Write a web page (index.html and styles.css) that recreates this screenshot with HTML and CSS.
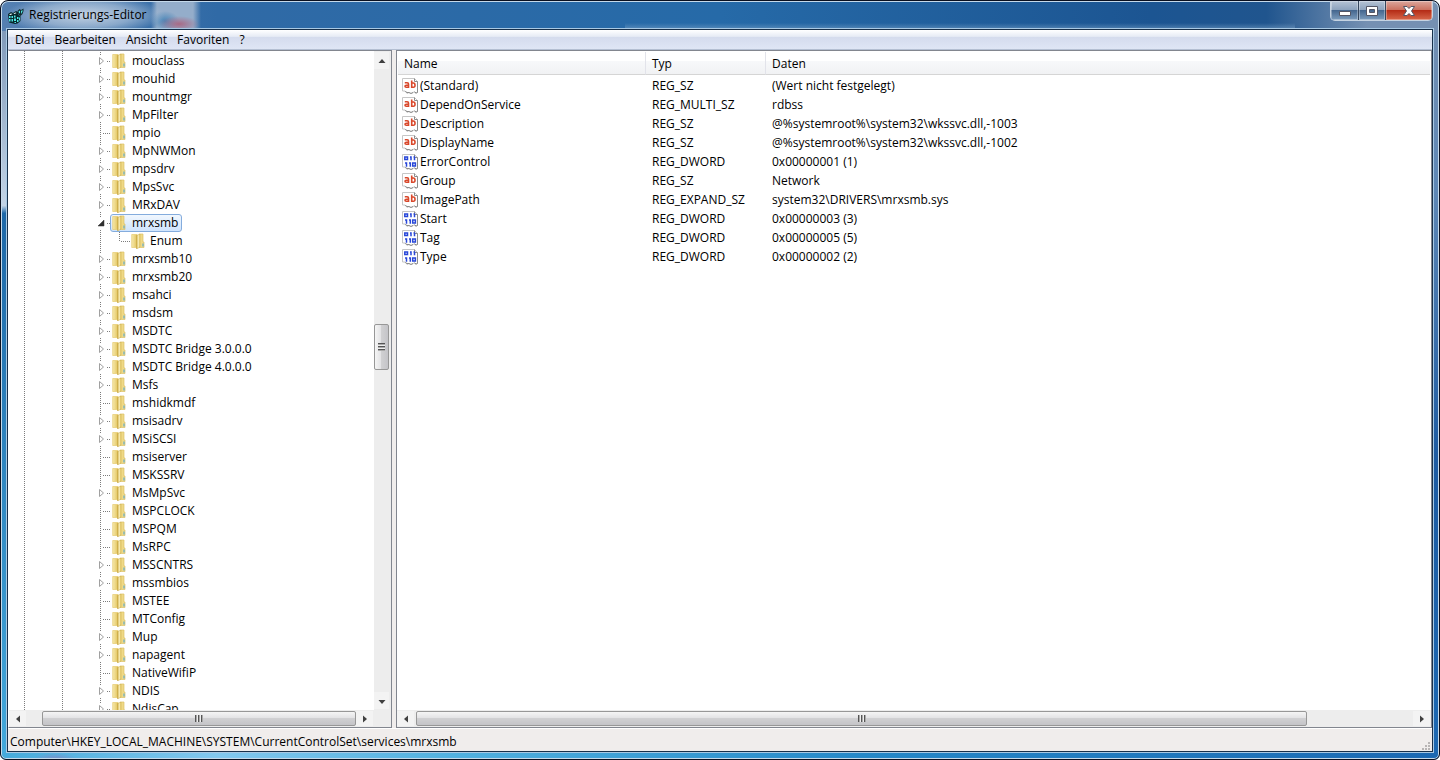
FILE: index.html
```html
<!DOCTYPE html>
<html lang="de">
<head>
<meta charset="utf-8">
<title>Registrierungs-Editor</title>
<link rel="stylesheet" href="styles.css">
</head>
<body>
<svg class="defs" aria-hidden="true">
  <defs>
    <linearGradient id="fl" x1="0" x2="1"><stop offset="0" stop-color="#f7eaae"/><stop offset="1" stop-color="#e2c35c"/></linearGradient>
    <linearGradient id="fr" x1="0" x2="1"><stop offset="0" stop-color="#c9a640"/><stop offset=".5" stop-color="#f9eeb8"/><stop offset="1" stop-color="#e6cc6c"/></linearGradient>
    <symbol id="folder" viewBox="0 0 14 16">
      <path d="M.700 1.500H6V14.500H.700z" fill="url(#fl)" stroke="#e6cb70" stroke-width=".7"/>
      <path d="M8.500 1h3.500v8h1v5.500H8z" fill="#efd986" stroke="#dcc168" stroke-width=".7"/>
      <path d="M5.500 2.500 9 1v13l-3.500 2z" fill="url(#fr)" stroke="#c9a845" stroke-width=".5"/>
      <path d="M11.500 10.500h1v3h-1z" fill="#48a4dc"/>
    </symbol>
    <symbol id="page" viewBox="0 0 16 16">
      <path d="M.5.500H12.500l3 3v11l-2 1-1.500-1.500-2 1-1 .5-2-1-1 1-2-1-1-1.500H.500z" fill="#fff" stroke="#c6c6c6"/>
      <path d="M12.500.500v3h3v11l-1.500.500-1.500-1.500M11 14.500l-2 1-2-1H4.500l-1-1.500" fill="none" stroke="#8c8c8c"/>
    </symbol>
    <symbol id="text" viewBox="0 0 16 16">
      <use href="#page"/>
      <path d="M2.800 4.800h2.400q1.300 0 1.300 1.200V10M6.500 7.300H4.300Q3 7.300 3 8.300t1.200 1h2.300M9.700 2.500V10M9.700 5h1.600q1.700 0 1.700 2.200T11.300 9.300H9.700" fill="none" stroke="#d9482b" stroke-width="1.600"/>
    </symbol>
    <symbol id="binary" viewBox="0 0 16 16">
      <use href="#page"/>
      <path d="M2.800 3h2.700v2.500H2.800zM10.700 9h2.700v3h-2.700zM9 2.200v4.100M12.500 2.200v4.100M4.500 8.200v4.600M8.300 8.200v4.600M8 3h1M11.500 3h1M3 9h1.500M7 9h1" fill="none" stroke="#2847d8" stroke-width="1.500"/>
    </symbol>
  </defs>
</svg>
<div class="window">
  <header class="titlebar">
    <svg class="app-icon" viewBox="0 0 16 16" aria-hidden="true">
      <path d="M0 6l3-2 2 1 3-2 2 1 .5 3 2 1v5l-3 2.500L7 16l-6-1.500z" fill="#06282c"/>
      <path d="M1 6.500l2-1 1.500.5-2 1zM5.500 5.500l2-1 1 .5-2 1z" fill="#fff"/>
      <path d="M1 8h1.500v2H1zM3.500 8H5v2H3.500zM6 7.500h1.500v2H6zM1 11h1.500v2.500H1zM3.500 11H5v2.500H3.500zM6 10.500h2V13H6zM9 9h1.500v2H9zM9 12h1.500v2H9zM6.500 14h1.500v1H6.500zM11 9.500h1v3h-1z" fill="#4fe4e2"/>
      <path d="M9.500 3l2-2 1.500 1L15.500.500v2.500l-1 3-2 2-2-1.500z" fill="#102d30"/>
      <path d="M10.500 3.500l1.500-1v3l-1-.5zM13 3l1.500-1v1.500L13 6z" fill="#4fe4e2"/>
    </svg>
    <h1 class="title">Registrierungs-Editor</h1>
    <div class="captions">
      <button class="cap" aria-label="Minimieren"><svg viewBox="0 0 14 12"><path d="M1.500 6.500h11v4h-11z" fill="#fff" stroke="#535666"/></svg></button>
      <button class="cap max" aria-label="Maximieren"><svg viewBox="0 0 14 12"><path fill-rule="evenodd" d="M1.500 1.500h11v9h-11zM4.500 4.500v3h5v-3z" fill="#fff" stroke="#535666"/></svg></button>
      <button class="cap close" aria-label="Schließen"><svg viewBox="0 0 14 12"><path d="M1.500 1.500h3.500l2 2 2-2h3.500L9.500 6l3 4.500H9l-2-2-2 2H1.500l3-4.500z" fill="#fff" stroke="#535666"/></svg></button>
    </div>
  </header>
  <main class="client">
    <nav class="menu">
      <button>Datei</button><button>Bearbeiten</button><button>Ansicht</button><button>Favoriten</button><button>?</button>
    </nav>
    <div class="panes">
      <section class="pane tree-pane" aria-label="Schlüssel">
        <div class="tree-area">
          <ul class="tree" id="tree"></ul>
          <div class="vscroll">
            <button class="arrow" aria-label="Nach oben"><svg viewBox="0 0 8 8"><path d="M.500 6L4 2l3.500 4z"/></svg></button>
            <div class="track"><div class="thumb"><i></i></div></div>
            <button class="arrow" aria-label="Nach unten"><svg viewBox="0 0 8 8"><path d="M.500 3L4 7l3.500-4z"/></svg></button>
          </div>
        </div>
        <div class="hscroll left">
          <button class="arrow" aria-label="Nach links"><svg viewBox="0 0 8 8"><path d="M6 .500L2 4l4 3.500z"/></svg></button>
          <div class="track"><div class="thumb"><i></i></div></div>
          <button class="arrow" aria-label="Nach rechts"><svg viewBox="0 0 8 8"><path d="M2 .500L6 4 2 7.500z"/></svg></button>
        </div>
      </section>
      <section class="pane list-pane" aria-label="Werte">
        <div class="list-area">
          <table class="values">
            <colgroup><col class="c-name"><col class="c-type"><col></colgroup>
            <thead><tr><th>Name</th><th>Typ</th><th>Daten</th></tr></thead>
            <tbody id="values"></tbody>
          </table>
        </div>
        <div class="hscroll right">
          <button class="arrow" aria-label="Nach links"><svg viewBox="0 0 8 8"><path d="M6 .500L2 4l4 3.500z"/></svg></button>
          <div class="track"><div class="thumb"><i></i></div></div>
          <button class="arrow" aria-label="Nach rechts"><svg viewBox="0 0 8 8"><path d="M2 .500L6 4 2 7.500z"/></svg></button>
        </div>
      </section>
    </div>
    <footer class="status">
      <span>Computer\HKEY_LOCAL_MACHINE\SYSTEM\CurrentControlSet\services\mrxsmb</span>
      <svg class="grip" viewBox="0 0 9 9" aria-hidden="true"><path d="M6 0h2v2H6zM3 3h2v2H3zM6 3h2v2H6zM0 6h2v2H0zM3 6h2v2H3zM6 6h2v2H6z"/></svg>
    </footer>
  </main>
</div>
<script src="app.js"></script>
</body>
</html>
```
FILE: app.js
```js
// "+" collapsed key, "-" expanded key, "." key without children, ">" child key
const keys = `+mouclass +mouhid +mountmgr +MpFilter .mpio +MpNWMon +mpsdrv +MpsSvc +MRxDAV -mrxsmb >Enum
+mrxsmb10 +mrxsmb20 +msahci +msdsm +MSDTC +MSDTC_Bridge_3.0.0.0 +MSDTC_Bridge_4.0.0.0 +Msfs .mshidkmdf
+msisadrv +MSiSCSI .msiserver .MSKSSRV +MsMpSvc .MSPCLOCK .MSPQM .MsRPC +MSSCNTRS +mssmbios .MSTEE
.MTConfig +Mup +napagent .NativeWifiP +NDIS +NdisCap`.split(/\s+/);

const toggle = {
  '+': '<button class="toggle" aria-label="Erweitern"><svg viewBox="0 0 7 10"><path d="M1.500 1.500v7l4-3.500z" fill="#fff" stroke="#a0a0a0"/></svg></button>',
  '-': '<button class="toggle open" aria-label="Reduzieren"><svg viewBox="0 0 7 10"><path d="M6 2v6H0z" fill="#303030" stroke="#303030" stroke-width=".5"/></svg></button>'
};

document.getElementById('tree').innerHTML = keys.map(k => {
  const kind = k[0], name = k.slice(1).replace(/_/g, ' ');
  const cls = kind === '>' ? 'node child' : kind === '-' ? 'node selected' : kind === '.' ? 'node leaf' : 'node';
  return `<li class="${cls}"><span class="joint">${toggle[kind] || ''}</span><span class="stub"></span>` +
    `<span class="key"><svg class="folder" aria-hidden="true"><use href="#folder"/></svg><span>${name}</span></span></li>`;
}).join('');

const values = [
  ['text', '(Standard)', 'REG_SZ', '(Wert nicht festgelegt)'],
  ['text', 'DependOnService', 'REG_MULTI_SZ', 'rdbss'],
  ['text', 'Description', 'REG_SZ', '@%systemroot%\\system32\\wkssvc.dll,-1003'],
  ['text', 'DisplayName', 'REG_SZ', '@%systemroot%\\system32\\wkssvc.dll,-1002'],
  ['binary', 'ErrorControl', 'REG_DWORD', '0x00000001 (1)'],
  ['text', 'Group', 'REG_SZ', 'Network'],
  ['text', 'ImagePath', 'REG_EXPAND_SZ', 'system32\\DRIVERS\\mrxsmb.sys'],
  ['binary', 'Start', 'REG_DWORD', '0x00000003 (3)'],
  ['binary', 'Tag', 'REG_DWORD', '0x00000005 (5)'],
  ['binary', 'Type', 'REG_DWORD', '0x00000002 (2)']
];

document.getElementById('values').innerHTML = values.map(([icon, name, type, data]) =>
  `<tr><td><span class="name"><svg aria-hidden="true"><use href="#${icon}"/></svg>${name}</span></td><td>${type}</td><td>${data}</td></tr>`
).join('');
```
FILE: styles.css
```css
* { box-sizing: border-box; }

body {
  margin: 0;
  background: #fff;
  font: 12px/18px "Open Sans", "Noto Sans", sans-serif;
  color: #000;
}

button {
  margin: 0;
  padding: 0;
  border: 0;
  background: none;
  font: inherit;
  color: inherit;
}

svg { display: block; }
.defs { position: absolute; width: 0; height: 0; }

.window {
  display: flex;
  flex-direction: column;
  height: 100vh;
  padding: 0 6px 7px;
  border: 1px solid #0a1020;
  border-radius: 8px 8px 6px 6px;
  box-shadow: inset 0 0 0 1px #c5d9ea;
  background:
    radial-gradient(ellipse 80px 20px at 84px 14px, #c3d2e3, #b9cbdf99 60%, #b9cbdf00),
    radial-gradient(ellipse 20px 8px at 178px 23px, #a86a86, #a86a8600),
    radial-gradient(ellipse 14px 10px at 164px 20px, #4a86b8, #4a86b800),
    linear-gradient(90deg, #0000 150px, #94adca 156px, #94adca 192px, #0000 200px) 0 0 / 100% 28px no-repeat,
    linear-gradient(#0000 22px, #7fa6ca88 28px) 624px 0 / 670px 28px no-repeat,
    linear-gradient(90deg, #5580b2, #306aa6 15%, #266aa8 50%, #1c5592 80%, #20558e 88%, #7590b2 95%, #7590b2) 0 0 / 100% 30px no-repeat,
    radial-gradient(ellipse 22px 6px at 54px 100%, #7a8fc8, #7a8fc800) 0 0 / 100% 100% no-repeat,
    linear-gradient(90deg, #45aadb, #83c8ee 15%, #50b0df 32%, #2588c8 60%, #1b68b2) 0 100% / 100% 10px no-repeat,
    linear-gradient(#7590b2, #c3d4e6 27%, #1e68a8 28%, #43a9dc) 0 0 / 9px 100% no-repeat,
    linear-gradient(#7590b2, #5e87b5 25%, #1d5ba2 60%, #1b68b2) 100% 0 / 9px 100% no-repeat;
}

.titlebar {
  display: flex;
  flex: none;
  align-items: flex-start;
  height: 28px;
}
.app-icon { width: 16px; height: 16px; margin: 7px 5px 0 1px; }
.title { flex: 1; margin: 5px 0 0; font-size: 12px; font-weight: 400; line-height: 18px; }

.captions {
  display: flex;
  border: 1px solid #c5d3e2;
  border-top: 0;
  border-radius: 0 0 5px 5px;
  overflow: hidden;
}
.cap {
  display: grid;
  place-items: center;
  width: 28px;
  height: 19px;
  border-right: 1px solid #34455c;
  background: linear-gradient(#b5c3d5, #8ca2bd 47%, #45678f 50%, #7d9dbd);
  box-shadow: inset 0 0 0 1px #ffffff55;
}
.cap.max { width: 27px; }
.cap.close { width: 46px; border: 0; background: linear-gradient(#dca79d, #cb705f 47%, #b52d17 50%, #d7684b); }
.cap svg { width: 14px; height: 12px; }

.client {
  display: flex;
  flex: 1;
  flex-direction: column;
  min-height: 0;
  border: 1px solid #18304a;
  box-shadow: 0 0 0 1px #a9c9e4;
  background: #f0edec;
}

.menu {
  display: flex;
  flex: none;
  height: 20px;
  padding: 0 2px;
  border-bottom: 1px solid #b4bfd2;
  background: linear-gradient(#fff, #e6ebf5 34%, #d4dbed 36%, #dfe6f5);
}
.menu button { padding: 0 5px; white-space: nowrap; }

.panes { display: flex; flex: 1; min-height: 0; gap: 4px; }
.pane {
  display: flex;
  flex-direction: column;
  min-width: 0;
  border: 1px solid #82868f;
  background: #fff;
}
.tree-pane { flex: none; width: 384px; border-left-color: #fff; }
.list-pane { flex: 1; }

.tree-area { display: flex; flex: 1; min-height: 0; }
.tree {
  flex: 1;
  margin: 0;
  padding: 1px 0 0;
  list-style: none;
  overflow: hidden;
  background:
    repeating-linear-gradient(#7c7c7c 0 1px, #fff 1px 2px) 15px 0 / 1px 100% no-repeat,
    repeating-linear-gradient(#7c7c7c 0 1px, #fff 1px 2px) 53px 0 / 1px 100% no-repeat;
}
.node { display: flex; align-items: center; height: 18px; padding-left: 89px; }
.joint {
  display: grid;
  place-items: center;
  width: 8px;
  height: 18px;
  background: repeating-linear-gradient(#7c7c7c 0 1px, #fff 1px 2px) 2px 0 / 1px 100% no-repeat;
}
.toggle { width: 8px; height: 12px; background: #fff; }
.toggle svg { width: 7px; height: 10px; }
.stub {
  width: 4px;
  height: 1px;
  background: repeating-linear-gradient(90deg, #fff 0 1px, #7c7c7c 1px 2px);
}
.leaf .stub { width: 8px; margin-left: -4px; }
.key {
  display: flex;
  align-items: center;
  gap: 5px;
  height: 18px;
  padding: 0 3px 0 0;
  border: 1px solid transparent;
  border-radius: 3px;
  white-space: nowrap;
}
.folder { width: 16px; height: 16px; }
.selected .key { border-color: #84acdd; background: linear-gradient(#f1f7fe, #cfe4fd); }
.child .stub {
  align-self: flex-start;
  width: 12px;
  height: 10px;
  margin-left: 13px;
  background:
    repeating-linear-gradient(#7c7c7c 0 1px, #fff 1px 2px) 0 0 / 1px 100% no-repeat,
    repeating-linear-gradient(90deg, #7c7c7c 0 1px, #fff 1px 2px) 0 100% / 100% 1px no-repeat;
}
.child .key { margin-left: -2px; gap: 4px; }

.arrow { display: grid; flex: none; place-items: center; width: 17px; height: 16px; background: #f3f3f3; }
.arrow svg { width: 8px; height: 8px; fill: #404040; }
.vscroll { display: flex; flex: none; flex-direction: column; width: 17px; padding: 1px 2px 1px 0; background: #ededed; }
.vscroll .arrow { width: 15px; height: 17px; }
.track { display: flex; flex: 1; min-width: 0; min-height: 0; }
.vscroll .track { flex-direction: column; }
.vscroll .track::before { content: ""; flex: 256; }
.vscroll .track::after { content: ""; flex: 324; }
.thumb { display: grid; place-items: center; border: 1px solid #979797; border-radius: 2px; }
.vscroll .thumb { height: 46px; background: linear-gradient(90deg, #f5f5f5, #e3e3e5 45%, #d0d0d2 50%, #c4c4c8); }
.vscroll i { width: 7px; height: 8px; background: repeating-linear-gradient(#555 0 1px, #aaa 1px 2px, #eee 2px 3px); }
.hscroll { display: flex; flex: none; height: 17px; padding: 1px 0; background: #ededed; }
.hscroll .arrow { height: 15px; }
.hscroll .thumb { background: linear-gradient(#f5f5f5, #e3e3e5 45%, #d0d0d2 50%, #c4c4c8); }
.hscroll i { width: 8px; height: 7px; background: repeating-linear-gradient(90deg, #555 0 1px, #aaa 1px 2px, #eee 2px 3px); }
.hscroll.left { padding-right: 18px; }
.left .track { padding-left: 16px; }
.left .thumb { flex: 1; }
.hscroll.right { padding-right: 1px; }
.right .thumb { flex: 891; }
.right .track { padding-left: 2px; }
.right .track::after { content: ""; flex: 106; }

.list-area { flex: 1; min-height: 0; padding: 1px 1px 0; overflow: hidden; }
.values { width: 100%; border-collapse: separate; border-spacing: 0; table-layout: fixed; }
.c-name { width: 248px; }
.c-type { width: 120px; }
.values th {
  height: 23px;
  padding: 1px 6px 0;
  border-bottom: 1px solid #d5d5d5;
  border-right: 1px solid #e2e3ea;
  background: linear-gradient(#fff 40%, #f7f8fa 42%, #f1f2f4);
  font-weight: 400;
  text-align: left;
}
.values th:last-child { border-right: 0; }
.values tbody::before { content: ""; display: block; height: 1px; }
.values td { height: 19px; padding: 0 6px; white-space: nowrap; }
.values td:first-child { padding-left: 4px; }
.name { display: flex; align-items: center; gap: 2px; }
.name svg { width: 16px; height: 16px; }

.status {
  display: flex;
  flex: none;
  align-items: center;
  justify-content: space-between;
  height: 23px;
  padding: 3px 1px 0 2px;
  border-top: 1px solid #fff;
}
.grip { align-self: flex-end; width: 9px; height: 9px; fill: #b8b5b5; }
```
